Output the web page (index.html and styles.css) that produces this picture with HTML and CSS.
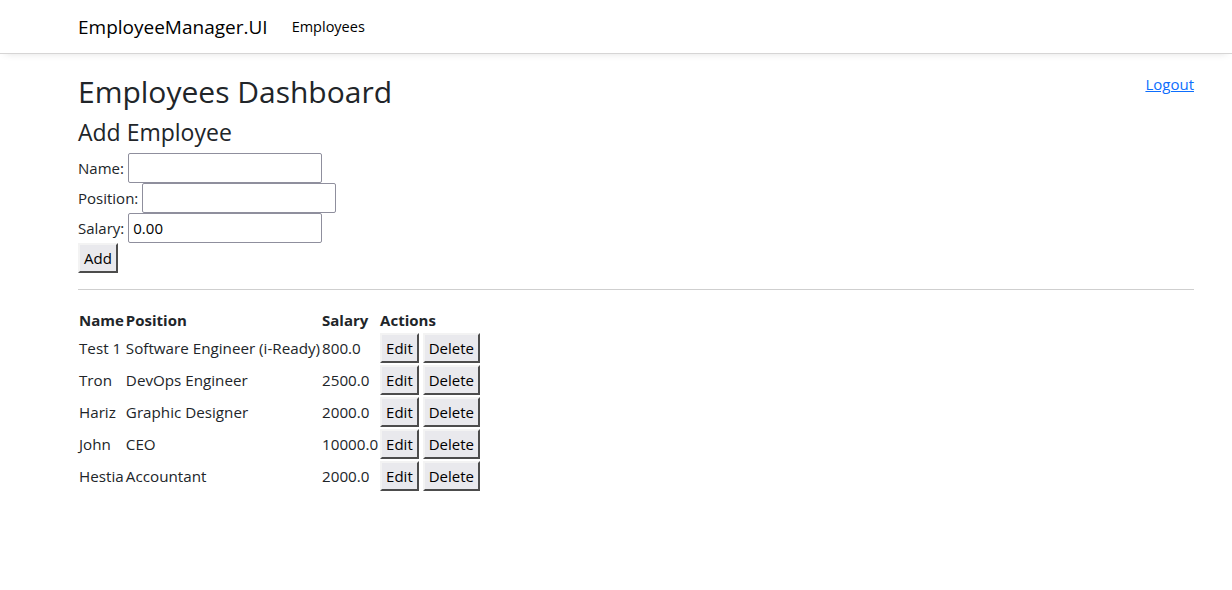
FILE: index.html
```html
<!DOCTYPE html>
<html>
<head>
<meta charset="utf-8">
<link rel="stylesheet" href="styles.css">
</head>
<body>
<header class="navbar">
  <a class="brand" href="#">EmployeeManager.UI</a>
  <a class="nav-link" href="#">Employees</a>
</header>
<main class="content">
  <div class="title-row">
    <h1 class="page-title">Employees Dashboard</h1>
    <a class="logout" href="#">Logout</a>
  </div>
  <h2 class="section-title">Add Employee</h2>
  <form class="add-form">
    <div class="field"><label>Name:</label> <input class="text-input" type="text"></div>
    <div class="field"><label>Position:</label> <input class="text-input" type="text"></div>
    <div class="field"><label>Salary:</label> <input class="text-input" type="text" value="0.00"></div>
    <div class="field"><button class="btn" type="button">Add</button></div>
  </form>
  <hr class="divider">
  <table class="emp-table">
    <thead>
      <tr><th>Name</th><th>Position</th><th>Salary</th><th>Actions</th></tr>
    </thead>
    <tbody>
      <tr><td>Test 1</td><td>Software Engineer (i-Ready)</td><td>800.0</td><td><button class="btn">Edit</button> <button class="btn">Delete</button></td></tr>
      <tr><td>Tron</td><td>DevOps Engineer</td><td>2500.0</td><td><button class="btn">Edit</button> <button class="btn">Delete</button></td></tr>
      <tr><td>Hariz</td><td>Graphic Designer</td><td>2000.0</td><td><button class="btn">Edit</button> <button class="btn">Delete</button></td></tr>
      <tr><td>John</td><td>CEO</td><td>10000.0</td><td><button class="btn">Edit</button> <button class="btn">Delete</button></td></tr>
      <tr><td>Hestia</td><td>Accountant</td><td>2000.0</td><td><button class="btn">Edit</button> <button class="btn">Delete</button></td></tr>
    </tbody>
  </table>
</main>
</body>
</html>
```
FILE: styles.css
```css
* { box-sizing: border-box; }
html, body { margin: 0; padding: 0; }
body {
  font-family: "Open Sans", "Noto Sans", sans-serif;
  font-size: 15px;
  color: #212529;
  background: #fff;
}
.navbar {
  height: 54px;
  display: flex;
  align-items: center;
  padding-left: 78px;
  border-bottom: 1px solid #d6d5d5;
  box-shadow: 0 0.25rem 0.5rem -0.3rem rgba(0,0,0,0.15);
}
.brand {
  font-size: 19px;
  color: #000;
  text-decoration: none;
}
.nav-link {
  margin-left: 24px;
  font-size: 14.5px;
  color: #000;
  text-decoration: none;
}
.content {
  padding: 20px 38px 0 78px;
}
.title-row {
  display: flex;
  justify-content: space-between;
  align-items: flex-start;
}
.page-title {
  margin: 0;
  font-size: 30px;
  font-weight: 400;
  line-height: 1.2;
}
.logout {
  margin-top: 0;
  color: #0d6efd;
  font-size: 15px;
}
.section-title {
  margin: 9px 0 6px;
  font-size: 23px;
  font-weight: 400;
  line-height: 1.2;
}
.field {
  display: flex;
  align-items: center;
  height: 30px;
}
.field label { margin-right: 4px; }
.text-input {
  width: 194px;
  height: 30px;
  border: 1px solid #8f8f9d;
  border-radius: 2px;
  padding: 1px 4px;
  font-family: inherit;
  font-size: 15px;
  color: #000;
}
.btn {
  font-family: inherit;
  font-size: 15px;
  color: #000;
  background: #e9e9ed;
  border: 2px outset #f0f0f0;
  border-color: #f3f3f3 #a0a0a0 #a0a0a0 #f3f3f3;
  padding: 0 4px;
  height: 30px;
  border-radius: 0;
}
.divider {
  margin: 16px 0 19px;
  border: 0;
  border-top: 1px solid #cfcfcf;
}
.emp-table {
  border-collapse: collapse;
  font-size: 15.2px;
}
.emp-table th, .emp-table td {
  padding: 1px;
  text-align: left;
  height: 32px;
  white-space: nowrap;
}
.emp-table th { height: 23px; vertical-align: top; font-weight: 700; font-size: 15px; }
```
